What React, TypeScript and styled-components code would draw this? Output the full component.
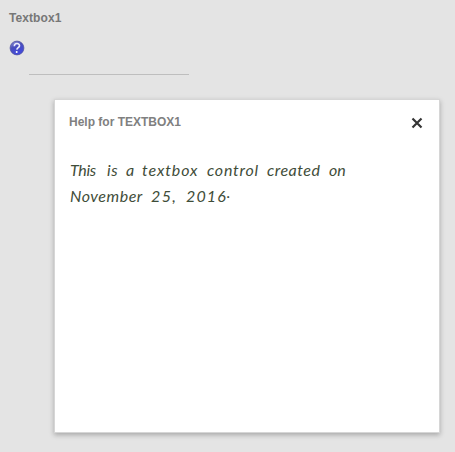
import React from "react";
import styled, { createGlobalStyle } from "styled-components";

const GlobalStyle = createGlobalStyle`
  * { box-sizing: border-box; }
  body { margin: 0; background: #e4e4e4; overflow: hidden; }
`;

const Page = styled.main`
  position: relative;
  width: 455px;
  height: 452px;
  padding: 10px 9px;
  background: #e4e4e4;
  font-family: "Liberation Sans", Arial, sans-serif;
`;

const FieldLabel = styled.label`
  display: block;
  height: 16px;
  font-size: 12px;
  font-weight: 700;
  line-height: 16px;
  letter-spacing: 0.08px;
  color: #777;
`;

const HelpButton = styled.button`
  display: block;
  width: 16px;
  height: 16px;
  margin-top: 14px;
  padding: 0;
  border: 0;
  background: none;
  svg { display: block; }
`;

const TextInput = styled.input`
  display: block;
  width: 160px;
  height: 19px;
  margin-left: 20px;
  padding: 0;
  border: 0;
  border-bottom: 1px solid #bebebe;
  background: transparent;
  outline: none;
`;

const Dialog = styled.section`
  position: absolute;
  left: 54px;
  top: 99px;
  width: 386px;
  height: 334px;
  padding: 14px 15px;
  background: #fff;
  border: 1px solid #d6d6d6;
  box-shadow: 0 2px 5px rgba(0, 0, 0, 0.27);
`;

const DialogHeader = styled.header`
  display: flex;
  justify-content: space-between;
  height: 18px;
  margin: 0 1px 0 -1px;
`;

const DialogTitle = styled.h2`
  margin: 0;
  font-size: 12px;
  font-weight: 700;
  line-height: 16px;
  color: #808080;
`;

const CloseButton = styled.button`
  width: 12px;
  height: 12px;
  margin-top: 3px;
  padding: 0;
  border: 0;
  background: none;
  svg { display: block; }
`;

const HelpText = styled.div`
  margin-top: 25px;
  font-family: Lato, sans-serif;
  font-size: 16px;
  font-style: italic;
  line-height: 26px;
  color: #3f4d39;
`;

const TextLine = styled.div`
  display: flex;
  height: 26px;
  white-space: pre;
`;

const Word = styled.span<{ $width: number; $spacing: number }>`
  flex: 0 0 ${(p) => p.$width}px;
  letter-spacing: ${(p) => p.$spacing}px;
`;

const RaisedStop = styled.span`
  vertical-align: 4px;
  line-height: 0;
`;

const HelpIcon = () => (
  <svg width="16" height="16" viewBox="0 0 16 16">
    <defs>
      <linearGradient id="ball" x1="0" y1="0" x2="0.5" y2="1">
        <stop offset="0" stopColor="#9ea0d8" />
        <stop offset="0.45" stopColor="#4a4fbd" />
        <stop offset="1" stopColor="#4249dd" />
      </linearGradient>
    </defs>
    <circle cx="8" cy="8" r="6.9" fill="url(#ball)" stroke="#5053a0" strokeWidth="0.8" />
    <path d="M5.3 6.2C5.3 2.7 10.7 2.8 10.5 5.8C10.3 7.6 8.1 7.7 7.8 9.7" fill="none" stroke="#eeeefc" strokeWidth="1.6" />
    <circle cx="7.7" cy="12.1" r="1" fill="#fff" />
  </svg>
);

const CloseIcon = () => (
  <svg width="12" height="12" viewBox="0 0 12 12">
    <path d="M1.5 1.5L10.5 10.5M10.5 1.5L1.5 10.5" stroke="#353535" strokeWidth="2.2" />
  </svg>
);

const firstLine = [
  { text: "This ", width: 37, spacing: -1.2 + 0.9 },
  { text: "is ", width: 19, spacing: 0.5 },
  { text: "a ", width: 16, spacing: 0 },
  { text: "textbox ", width: 65, spacing: 0.9 },
  { text: "control ", width: 60, spacing: 0.75 },
  { text: "created ", width: 62, spacing: 0.5 },
  { text: "on", width: 20, spacing: 0 },
];

const secondLine = [
  { text: "November ", width: 81, spacing: 0.55 },
  { text: "25, ", width: 35, spacing: 1.4 },
];

export default function App() {
  return (
    <Page>
      <GlobalStyle />
      <FieldLabel htmlFor="textbox1">Textbox1</FieldLabel>
      <HelpButton aria-label="Help"><HelpIcon /></HelpButton>
      <TextInput id="textbox1" />
      <Dialog role="dialog" aria-label="Help for TEXTBOX1">
        <DialogHeader>
          <DialogTitle>Help for TEXTBOX1</DialogTitle>
          <CloseButton aria-label="Close"><CloseIcon /></CloseButton>
        </DialogHeader>
        <HelpText>
          <TextLine>
            {firstLine.map((w) => (
              <Word key={w.text} $width={w.width} $spacing={w.spacing}>{w.text}</Word>
            ))}
          </TextLine>
          <TextLine>
            {secondLine.map((w) => (
              <Word key={w.text} $width={w.width} $spacing={w.spacing}>{w.text}</Word>
            ))}
            <Word $width={50} $spacing={1.1}>2016<RaisedStop>.</RaisedStop></Word>
          </TextLine>
        </HelpText>
      </Dialog>
    </Page>
  );
}
